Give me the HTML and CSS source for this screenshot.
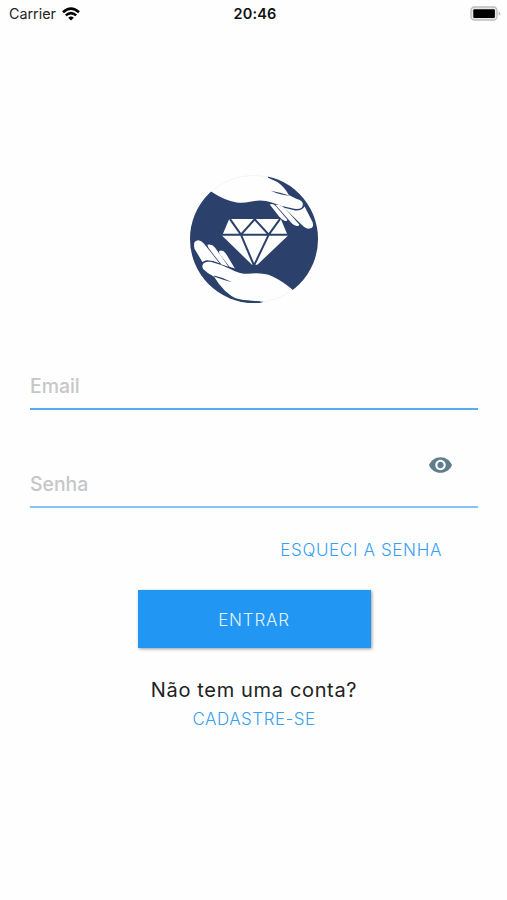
FILE: index.html
```html
<!DOCTYPE html>
<html lang="pt-BR">
<head>
    <meta charset="UTF-8">
    <meta name="viewport" content="width=device-width, initial-scale=1.0">
    <title>Login</title>
    <link rel="stylesheet" href="styles.css">
</head>
<body>
    <div class="status-bar">
        <div class="carrier">
            <span>Carrier</span>
            <svg class="wifi" viewBox="0 0 18 14" fill="none" stroke="#000" stroke-width="2.6">
                <path d="M1 5.2 Q9 -1.8 17 5.2"/>
                <path d="M3.8 8.4 Q9 3.8 14.2 8.4"/>
                <path d="M6.2 10.7 Q9 8.3 11.8 10.7 L9 13.6 Z" fill="#000" stroke="none"/>
            </svg>
        </div>
        <span class="time">20:46</span>
        <svg class="battery" viewBox="0 0 31 16">
            <rect x="1" y="1" width="26" height="13" rx="3.5" fill="#e8e8e8" stroke="#bdbdbd" stroke-width="1.3"/>
            <rect x="3.3" y="3.3" width="21.6" height="8.6" rx="1" fill="#000"/>
            <path d="M28.7 5.2 Q31.8 7.5 28.7 9.8 Z" fill="#b5b5b5"/>
        </svg>
    </div>

    <div class="container">
        <svg class="logo" viewBox="31 30 382 382">
            <defs>
                <clipPath id="circle"><circle cx="222" cy="221" r="191"/></clipPath>
            </defs>
            <circle cx="222" cy="221" r="191" fill="#2b406b"/>
            <!-- top hand -->
            <g fill="#fefefe">
                <path d="M269 118 Q278 114 288 124 L321 163 Q322 169 314 167 Q305 164 297 154 Z"/>
                <path d="M286 119 Q302 117 317 132 L357 178 Q358 183 350 182 Q341 181 334 173 Z"/>
                <path d="M312 128 L345 136 Q365 137 373 124 L397 171 Q402 188 388 190 Q376 191 365 179 Z"/>
                <path d="M80 73 L95 80 Q132 105 170 112 Q190 115 210 110 Q245 102 275 112 Q310 126 342 131 Q367 134 368 118 Q368 106 348 101 L326 90 Q315 68 292 51 L264 38 L260 15 L80 15 Z"/>
            </g>
            <path d="M272 77 Q305 83 329 92 Q302 91 272 77 Z" fill="#2b406b"/>
            <!-- bottom hand -->
            <g fill="#fefefe">
                <path d="M118 257 Q129 252 139 266 L165 309 L149 304 L120 267 Q117 261 118 257 Z"/>
                <path d="M83 238 Q96 234 106 247 L146 304 L125 297 Q105 273 86 247 Z"/>
                <path d="M43 238 Q43 226 56 225 Q65 226 76 239 L119 293 Q95 283 77 285 L68 290 L44 249 Z"/>
                <path d="M68 300 Q72 287 92 289 Q121 296 153 311 Q177 325 204 325 Q246 320 276 332 Q308 347 338 373 L350 385 L300 430 L240 420 L240 407 L176 403 Q132 384 103 334 Q84 324 71 311 Q67 306 68 300 Z"/>
            </g>
            <path d="M103 330 Q130 336 157 350 Q130 344 104 334 Z" fill="#2b406b"/>
            <path d="M166 398 Q202 408 250 408 L240 414 Q205 416 166 402 Z" fill="#2b406b" clip-path="url(#circle)"/>
            <!-- diamond -->
            <path d="M148 161 H302 L323 211 L232 298 H216 L127 211 Z" fill="#fefefe"/>
            <path d="M127 208 H323 M150 161 L183 208 L224 162 L266 208 L300 161 M183 208 L222 300 L266 208" fill="none" stroke="#2b406b" stroke-width="6"/>
            <circle cx="222" cy="221" r="190" fill="none" stroke="#2b406b" stroke-opacity=".08" stroke-width="2"/>
        </svg>

        <form class="login-form">
            <input type="text" class="email" name="email" placeholder="Email">
            <div class="password">
                <input type="password" name="senha" placeholder="Senha">
                <svg class="eye" viewBox="1 4.5 22 15" fill="#607d8b">
                    <path d="M12 4.5C7 4.5 2.73 7.61 1 12c1.73 4.39 6 7.5 11 7.5s9.27-3.11 11-7.5c-1.73-4.39-6-7.5-11-7.5zM12 17c-2.76 0-5-2.24-5-5s2.24-5 5-5 5 2.24 5 5-2.24 5-5 5zm0-8c-1.66 0-3 1.34-3 3s1.34 3 3 3 3-1.34 3-3-1.34-3-3-3z"/>
                </svg>
            </div>
            <a class="link forgot">ESQUECI A SENHA</a>
            <button type="button" class="login-btn">ENTRAR</button>
        </form>

        <span class="question">Não tem uma conta?</span>
        <a class="link signup">CADASTRE-SE</a>
    </div>
</body>
</html>
```

FILE: styles.css
```css
* {
    box-sizing: border-box;
}

body {
    margin: 0;
    height: 900px;
    background: #fefefe;
    font-family: Inter, sans-serif;
    overflow: hidden;
}

.status-bar {
    display: grid;
    grid-template-columns: 1fr auto 1fr;
    align-items: center;
    height: 27px;
    padding: 0 6px 0 9px;
    font-size: 14.3px;
    color: #222;
}

.carrier {
    display: flex;
    align-items: center;
    gap: 6px;
}

.wifi {
    width: 18px;
    height: 14px;
}

.time {
    font-weight: 600;
    font-size: 14.5px;
    letter-spacing: 0.2px;
    color: #111;
}

.battery {
    width: 31px;
    height: 16px;
    justify-self: end;
}

.container {
    display: flex;
    flex-direction: column;
    align-items: center;
    padding: 148px 29px 0 30px;
}

.logo {
    width: 128px;
    height: 128px;
}

.login-form {
    display: flex;
    flex-direction: column;
    align-items: center;
    width: 100%;
    margin-top: 58px;
}

input {
    width: 100%;
    height: 49px;
    padding: 2px 0 0;
    border: none;
    border-bottom: 2px solid #64b5f6;
    outline: none;
    background: transparent;
    font-family: Inter, sans-serif;
    font-size: 19.4px;
    font-weight: 500;
}

input::placeholder {
    color: #c6c6c8;
}

.email {
    border-bottom-color: #5aaaf0;
}

.password {
    position: relative;
    width: 100%;
    margin-top: 49px;
}

.password input {
    display: block;
    border-bottom: 2px solid #84c2f7;
}

/* sits over the right end of the password field */
.eye {
    position: absolute;
    top: -2px;
    right: 26px;
    width: 23px;
    height: 16px;
}

.link {
    color: #399ff0;
    font-size: 17px;
    font-weight: 300;
    line-height: 20px;
    letter-spacing: 0.5px;
}

.forgot {
    align-self: flex-end;
    margin: 32px 36px 0 0;
    letter-spacing: 0.65px;
}

.login-btn {
    width: 233px;
    height: 58px;
    margin-top: 30px;
    padding-top: 3px;
    border: none;
    background: #2196f3;
    box-shadow: 1px 1px 3px rgba(0, 0, 0, 0.4);
    color: #e3f2fd;
    font-family: Inter, sans-serif;
    font-size: 17px;
    font-weight: 300;
    letter-spacing: 0.8px;
}

.question {
    margin-top: 30px;
    color: #222;
    font-size: 20px;
    line-height: 24px;
    letter-spacing: 0.65px;
}

.signup {
    margin-top: 7px;
}
```
